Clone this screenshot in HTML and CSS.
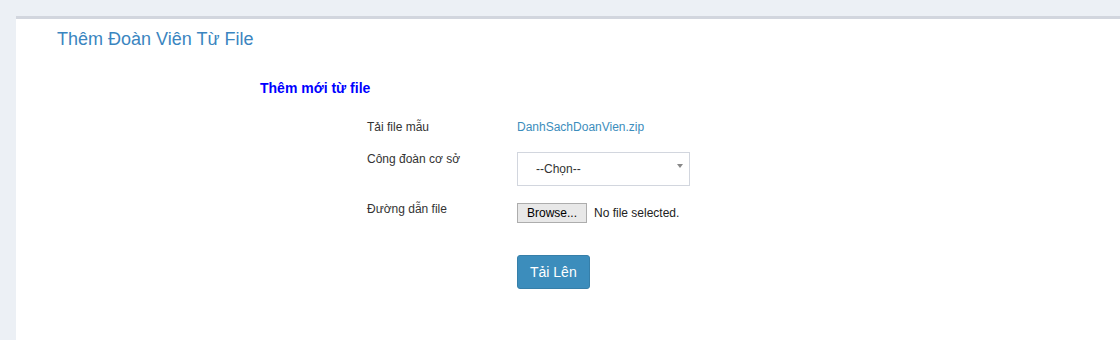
FILE: index.html
```html
<!DOCTYPE html>
<html lang="vi">

<head>
    <meta charset="UTF-8">
    <meta name="viewport" content="width=device-width, initial-scale=1.0">
    <title>Thêm Đoàn Viên Từ File</title>
    <link rel="stylesheet" href="styles.css">
</head>

<body>
    <div class="box">
        <div class="box-header">
            <h3>Thêm Đoàn Viên Từ File</h3>
        </div>

        <div class="box-body">
            <h4 class="section-title">Thêm mới từ file</h4>

            <div class="form-row first">
                <label>Tải file mẫu</label>
                <a href="#" class="link-file">DanhSachDoanVien.zip</a>
            </div>

            <div class="form-row">
                <label for="cong-doan">Công đoàn cơ sở</label>
                <div class="select-wrap">
                    <select id="cong-doan">
                        <option>--Chọn--</option>
                    </select>
                </div>
            </div>

            <div class="form-row">
                <label>Đường dẫn file</label>
                <div class="file-input">
                    <span class="btn-browse">Browse...</span>
                    <span class="file-name">No file selected.</span>
                </div>
            </div>

            <div class="form-actions">
                <button class="btn-upload">Tải Lên</button>
            </div>
        </div>
    </div>
</body>

</html>
```

FILE: styles.css
```css
body {
    margin: 0;
    padding: 16px 0 0 16px;
    background-color: #ecf0f5;
    font-family: Arial, "Liberation Sans", sans-serif;
    font-size: 12px;
    color: #333;
}

.box {
    background-color: #fff;
    border-top: 3px solid #d2d6de;
    min-height: 321px;
}

.box-header {
    padding: 10px 0 0 41px;
}

.box-header h3 {
    margin: 0;
    font-size: 18px;
    font-weight: normal;
    line-height: 20px;
    color: #3a85c0;
}

.box-body {
    padding-left: 244px;
}

.section-title {
    margin: 32px 0 0;
    font-size: 14px;
    line-height: 15px;
    font-weight: bold;
    color: #0000ff;
}

.form-row {
    display: grid;
    grid-template-columns: 150px 172px;
    margin: 17px 0 0 107px;
    line-height: 15px;
}

.form-row.first {
    margin-top: 24px;
}

.form-row + .form-row + .form-row {
    margin-top: 16px;
}

.link-file {
    color: #3c8dbc;
    text-decoration: none;
}

.select-wrap {
    position: relative;
}

.select-wrap select {
    appearance: none;
    -webkit-appearance: none;
    width: 173px;
    height: 34px;
    margin: 0;
    padding: 0 0 0 18px;
    border: 1px solid #d2d6de;
    border-radius: 0;
    background-color: #fff;
    font-family: Arial, "Liberation Sans", sans-serif;
    font-size: 12px;
    color: #333;
}

.select-wrap::after {
    content: "";
    position: absolute;
    top: 12px;
    right: 6px;
    border-style: solid;
    border-width: 4px 3.5px 0;
    border-color: #888 transparent transparent;
}

.file-input {
    display: flex;
    align-items: center;
    gap: 7px;
    margin-top: 1px;
    white-space: nowrap;
}

.btn-browse {
    box-sizing: border-box;
    width: 70px;
    height: 20px;
    line-height: 18px;
    text-align: center;
    background-color: #e8e8e8;
    border: 1px solid #adadad;
    color: #000;
}

.file-name {
    color: #222;
}

.form-actions {
    margin: 32px 0 0 257px;
}

.btn-upload {
    background-color: #3c8dbc;
    border: 1px solid #367fa9;
    border-radius: 3px;
    padding: 6px 12px;
    font-family: Arial, "Liberation Sans", sans-serif;
    font-size: 14px;
    line-height: 20px;
    color: #fff;
    cursor: pointer;
}

.btn-upload:hover {
    background-color: #367fa9;
}
```
